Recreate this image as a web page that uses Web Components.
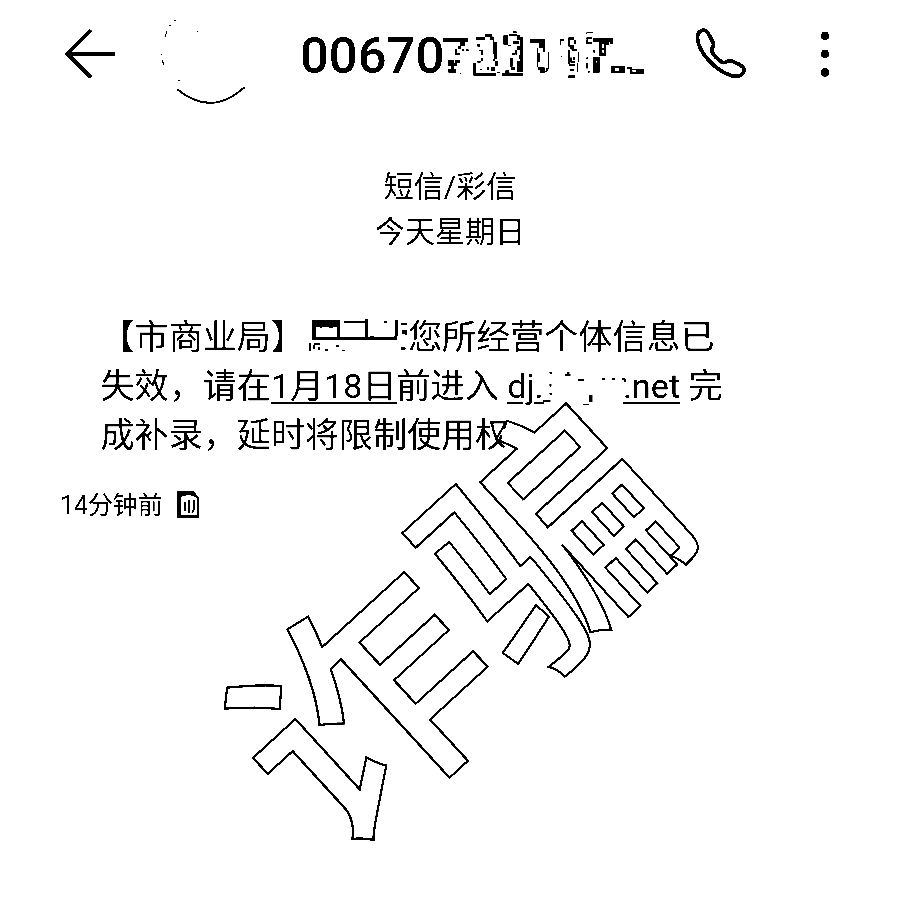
<!DOCTYPE html>
<html lang="zh-CN"><head><meta charset="utf-8"><title>短信</title>
<style>body{margin:0;background:#fff}</style></head><body>
<sms-screen></sms-screen>
<script>
const def=(n,h)=>customElements.define(n,class extends HTMLElement{constructor(){super();this.attachShadow({mode:'open'}).innerHTML=h}});
// Builds one path from "x,y,w,h" boxes, for the mosaic fragments.
const boxes=s=>'<path fill-rule="evenodd" d="'+s.trim().split(/\s+/).map(b=>{const [x,y,w,h]=b.split(',');return `M${x} ${y}h${w}v${h}h-${w}z`}).join('')+'"/>';
const numA=boxes('10,30,74,12 60,42,15,12 54,54,8,10 45,62,6,20 51,76,9,6 78,64,8,5 66,64,6,6 25,95,17,20 45,95,15,9 42,104,8,10 34,115,8,7 25,122,23,12 60,135,3,3 108,27,28,10 135,18,22,8 150,26,12,10 158,36,5,42 163,42,8,50 158,92,8,8 165,100,10,15 100,105,9,38 112,48,8,8 118,66,12,4 124,70,6,12 112,98,10,6 122,90,8,8 109,135,60,8 140,117,8,8 154,117,12,12 120,122,5,5 190,22,14,28 206,18,26,5 204,50,10,5 218,10,12,5 220,38,18,10 232,22,8,14 241,27,8,73 230,100,19,32 232,54,9,12 226,66,6,14 210,90,8,26 215,74,10,6 212,118,14,8 236,80,5,12 186,134,62,10 196,127,12,7 170,132,10,4 270,33,44,12 296,45,14,14 290,60,5,58 295,75,5,26 295,118,19,8 300,126,14,8');
const numB=boxes('0,33,6,38 15,72,4,50 10,120,6,8 4,128,8,5 50,33,5,18 56,34,8,4 54,85,3,3 76,28,18,8 76,36,5,20 82,50,12,14 76,66,5,42 86,64,16,4 104,72,4,30 82,88,4,16 86,100,10,5 90,86,6,10 94,36,4,12 78,109,18,5 102,104,4,28 80,122,14,6 76,142,20,8 130,12,20,2 130,15,3,3 130,28,18,5 130,34,6,14 136,42,12,6 150,30,50,12 168,42,22,42 176,48,6,12 178,66,5,8 190,42,8,8 200,30,9,18 151,66,5,8 150,86,20,48 160,98,3,6 130,88,5,5 130,104,4,18 134,128,6,6 204,114,42,20 216,120,13,8 252,117,14,6 260,123,42,16 268,125,12,6');
const nameBits=boxes('666,30,84,22 666,52,12,28 740,52,10,28 666,80,255,10 690,52,6,3 716,52,12,3 760,32,64,7 824,28,10,52 913,30,9,50 882,32,9,6 840,78,10,2 932,40,20,4 935,60,8,12 945,60,4,16 932,112,14,7 655,98,6,26 672,100,18,6 668,106,5,12 684,110,6,10 705,118,10,4 738,104,8,6 755,120,8,4');
const linkBits=boxes('444,185,7,6 444,222,6,8 444,248,8,6 496,186,8,6 490,192,17,7 530,208,18,4 600,205,10,4 632,205,10,4 662,205,10,4 668,209,5,6 562,255,11,22 545,281,17,4 425,270,22,6');
def('call-bar',`<style>
:host{display:flex;height:110px;box-sizing:border-box;align-items:center;color:#000}
svg{display:block;flex:none;overflow:visible}
.n{font:500 50.8px/113px Roboto,"Liberation Sans",sans-serif;margin-left:54px;width:143px;white-space:nowrap}
</style>
<svg style="margin-left:64px" width="52" height="110" fill="none" stroke="#000" stroke-width="3.6"><path d="M27 30 3.5 54 27 77.5M3.5 54H51"/></svg>
<svg style="margin-left:44px" width="86" height="110" fill="none" stroke="#000"><path stroke-width="2" d="M17 89Q47 114 76 94l9-7"/><path stroke-width="1.2" d="M14 20.500h2M9 26l2-1M5 37l2-6M1.500 54v1M2 60l2 5M37 31.500h1M19 80v1"/></svg>
<span class="n">00670</span>
<svg width="203" height="110"><g transform="translate(-3 28) scale(.33333)">${numA}</g><g transform="translate(100 28) scale(.33333)">${numB}</g></svg>
<svg style="margin-left:50px" width="52" height="110" fill="none" stroke="#000" stroke-width="3.8" stroke-linejoin="round"><path d="M5.500 30.500c4-1.500 6 1 8 5l4 8c1 3-2 4-2 7 2 5 6 9 11 12 3 1 5-2 8-2l9 4c3 2 4.500 3 4.500 5 0 6-6 8-13 6C18 70 3 52 1.500 39c-.4-4 1-7 4-8.500z"/></svg>
<svg style="margin-left:72px" width="10" height="110"><circle cx="5" cy="36" r="4.4"/><circle cx="5" cy="54" r="4.4"/><circle cx="5" cy="72.300" r="4.4"/></svg>`);
def('thread-stamp',`<style>:host{display:block;text-align:center;font:30px/45px Roboto,"Noto Sans CJK SC",sans-serif}</style><slot></slot>`);
def('message-body',`<style>:host{display:block;margin:0 0 0 100.500px;font:34.1px/49px Roboto,"Noto Sans CJK SC",sans-serif;white-space:nowrap}
div{height:49px}u{text-decoration-thickness:2px;text-underline-offset:4px}
svg{display:inline-block;vertical-align:top;overflow:visible;height:49px}</style>
<div>【市商业局】<svg width="103"><g transform="translate(-214.800 -3) scale(.33333)">${nameBits}</g></svg>您所经营个体信息已</div>
<div>失效，请在<u>1月18日</u>前进入 <u>dj.</u><svg width="79.5"><g transform="translate(-142.500 -52) scale(.33333)">${linkBits}</g></svg><u>.net</u> 完</div>
<div>成补录，延时将限制使用权</div>`);
def('message-meta',`<style>:host{display:flex;margin-left:60px;font:24.9px/36px Roboto,"Noto Sans CJK SC",sans-serif}svg{margin:2px 0 0 13px}</style><slot></slot>
<svg width="24" height="30" fill="none" stroke="#000" stroke-width="2"><path d="M2 2H17L22 8V27H2Z"/><path d="M2 2H17L22 8 19 7 14 5 6 6 3 10Z" fill="#000" stroke="none"/><path d="M4 8V26H22" stroke-width="1.500"/><path d="M9 12v9M13 10v13M18 10v9l-2 4" stroke-width="1.600"/></svg>`);
def('scam-mark',`<style>:host{position:absolute;left:0;top:0}svg{display:block;overflow:visible}text{font:500 245px "Noto Sans CJK SC",sans-serif;fill:none;stroke:#000;stroke-width:2.2}</style>
<svg width="900" height="900"><path fill="#fff" d="M500 431 510 426 520 450 498 452 506 446z"/><g transform="rotate(-42.5)"><text transform="translate(-337 857) scale(1.05 .975)">诈</text><text transform="translate(-76 861) scale(.98 1)">骗</text></g></svg>`);
def('sms-screen',`<style>:host{display:block;position:relative;width:900px;height:900px;background:#fff;overflow:hidden;filter:grayscale(1) contrast(30)}
thread-stamp{margin-top:54px}message-body{margin-top:59px}message-meta{margin-top:28px}</style>
<call-bar></call-bar><thread-stamp>短信/彩信<br>今天星期日</thread-stamp><message-body></message-body><message-meta>14分钟前</message-meta><scam-mark></scam-mark>`);
</script></body></html>
